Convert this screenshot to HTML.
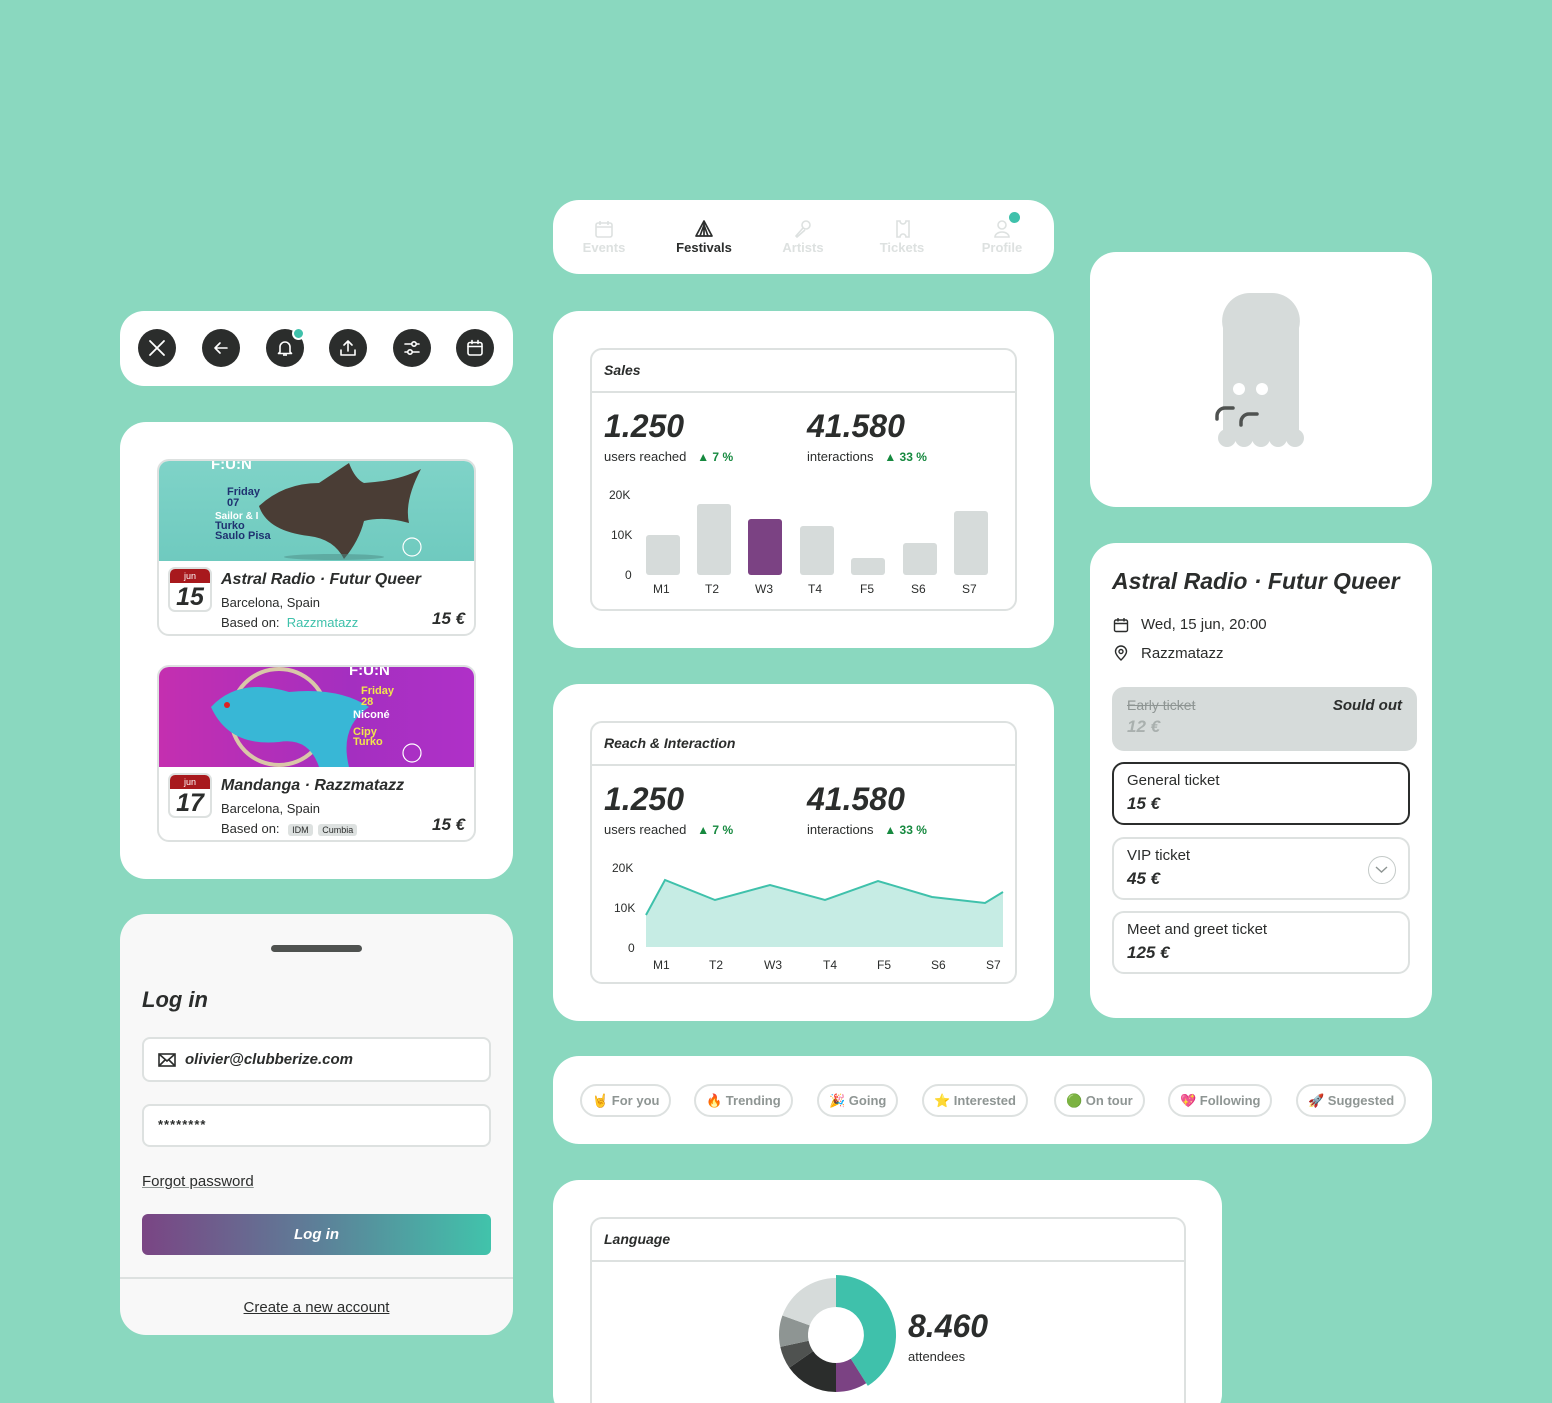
<!DOCTYPE html>
<html><head><meta charset="utf-8"><style>
*{box-sizing:border-box;margin:0;padding:0}
html,body{width:1552px;height:1403px;overflow:hidden}
body{background:#8AD8BF;font-family:"Liberation Sans",sans-serif;color:#2b2d2c;position:relative}
.card{position:absolute;background:#fff;border-radius:26px}
.abs{position:absolute}
.bi{font-weight:bold;font-style:italic}
.box{position:absolute;border:2px solid #dde1e0;border-radius:12px;background:#fff}
.btn{position:absolute;width:38px;height:38px;border-radius:50%;background:#2b2d2c;top:329px}
.btn svg{position:absolute;left:9px;top:9px}
.chip{position:absolute;top:1084px;height:33px;border:2px solid #dde1e0;border-radius:17px;font-size:13px;font-weight:bold;color:#8e9593;line-height:29px;padding:0 10px;white-space:nowrap}
.tk{position:absolute;left:1112px;width:298px;height:63px;border:2px solid #dde1e0;border-radius:12px;padding:8px 13px}
.tk .n{font-size:15px}
.tk .p{font-size:17px;font-weight:bold;font-style:italic;margin-top:5px}
.nav{position:absolute;top:240px;font-size:13px;font-weight:bold;color:#dde1e0;width:80px;text-align:center}
.lbl{position:absolute;font-size:12px;color:#2b2d2c}
.big{font-size:32px}
</style></head><body>

<!-- Toolbar -->
<div class="card" style="left:120px;top:311px;width:393px;height:75px;border-radius:24px"></div>
<div class="btn" style="left:138px"><svg width="20" height="20" viewBox="0 0 20 20" fill="none" stroke="#fff" stroke-width="1.8" stroke-linecap="round"><path d="M3 3L17 17M17 3L3 17"/></svg></div>
<div class="btn" style="left:202px"><svg width="20" height="20" viewBox="0 0 20 20" fill="none" stroke="#fff" stroke-width="1.6" stroke-linecap="round" stroke-linejoin="round"><path d="M4 10H16M9 5L4 10L9 15"/></svg></div>
<div class="btn" style="left:266px"><svg width="20" height="20" viewBox="0 0 20 20" fill="none" stroke="#fff" stroke-width="1.6" stroke-linejoin="round"><path d="M5 14V9a5 5 0 0 1 10 0v5l1.5 1.5h-13Z"/><path d="M8 17h4"/></svg></div>
<div class="abs" style="left:292px;top:327px;width:13px;height:13px;border-radius:50%;background:#3fc1ab;border:2px solid #fff"></div>
<div class="btn" style="left:329px"><svg width="20" height="20" viewBox="0 0 20 20" fill="none" stroke="#fff" stroke-width="1.6" stroke-linecap="round" stroke-linejoin="round"><path d="M10 13V3M6 7l4-4 4 4M3 12v5h14v-5"/></svg></div>
<div class="btn" style="left:393px"><svg width="20" height="20" viewBox="0 0 20 20" fill="none" stroke="#fff" stroke-width="1.6" stroke-linecap="round"><path d="M3 6h14M3 14h14"/><circle cx="12" cy="6" r="2.2" fill="#2b2d2c"/><circle cx="8" cy="14" r="2.2" fill="#2b2d2c"/></svg></div>
<div class="btn" style="left:456px"><svg width="20" height="20" viewBox="0 0 20 20" fill="none" stroke="#fff" stroke-width="1.6" stroke-linecap="round"><rect x="3" y="4.5" width="14" height="12.5" rx="2"/><path d="M3 8.5h14M7 2.5v3M13 2.5v3"/></svg></div>

<!-- Events card -->
<div class="card" style="left:120px;top:422px;width:393px;height:457px"></div>
<div class="box" style="left:157px;top:459px;width:319px;height:177px;overflow:hidden">
  <div class="abs" style="left:0;top:0;width:319px;height:100px;background:linear-gradient(180deg,#7fd3c8,#6fcabf)">
    <svg width="319" height="100" viewBox="0 0 319 100"><path d="M100 45 Q125 22 160 22 L190 2 Q196 18 205 22 Q240 20 262 8 Q245 40 250 62 Q225 55 205 60 Q200 80 185 98 Q175 78 150 75 Q108 70 100 45Z" fill="#4a3d35"/><ellipse cx="175" cy="96" rx="50" ry="3" fill="#4b8b85" opacity=".5"/><text x="52" y="8" font-size="15" font-weight="bold" fill="#fff" font-family="Liberation Sans">F:U:N</text><text x="68" y="34" font-size="11" font-weight="bold" fill="#1f3270" font-family="Liberation Sans">Friday</text><text x="68" y="45" font-size="11" font-weight="bold" fill="#1f3270" font-family="Liberation Sans">07</text><text x="56" y="58" font-size="10" font-weight="bold" fill="#fff" font-family="Liberation Sans">Sailor &amp; I</text><text x="56" y="68" font-size="11" font-weight="bold" fill="#1f3270" font-family="Liberation Sans">Turko</text><text x="56" y="78" font-size="11" font-weight="bold" fill="#1f3270" font-family="Liberation Sans">Saulo Pisa</text><circle cx="253" cy="86" r="9" fill="none" stroke="#fff" stroke-width="1.2"/></svg>
  </div>
  <div class="abs" style="left:9px;top:106px;width:44px;height:45px;border:2px solid #dde1e0;border-radius:7px;overflow:hidden"><div style="background:#a8191d;color:#fff;font-size:9px;text-align:center;height:14px;line-height:14px">jun</div><div class="bi" style="font-size:25px;text-align:center;line-height:28px">15</div></div>
  <div class="abs bi" style="left:62px;top:110px;font-size:16px">Astral Radio · Futur Queer</div>
  <div class="abs" style="left:62px;top:134px;font-size:13px">Barcelona, Spain</div>
  <div class="abs" style="left:62px;top:154px;font-size:13px">Based on: &nbsp;<span style="color:#3fc1ab">Razzmatazz</span></div>
  <div class="abs bi" style="left:273px;top:148px;font-size:17px">15 €</div>
</div>
<div class="box" style="left:157px;top:665px;width:319px;height:177px;overflow:hidden">
  <div class="abs" style="left:0;top:0;width:319px;height:100px;background:linear-gradient(90deg,#c42fb0,#a42fc0 60%,#b030c8)">
    <svg width="319" height="100" viewBox="0 0 319 100"><circle cx="120" cy="50" r="48" fill="none" stroke="#d9c7a8" stroke-width="4"/><path d="M52 40 Q80 10 130 25 Q180 20 210 40 Q180 60 190 100 L160 100 Q150 70 120 75 Q70 80 52 40Z" fill="#38b7d6"/><circle cx="68" cy="38" r="3" fill="#d22"/><text x="190" y="8" font-size="15" font-weight="bold" fill="#fff" font-family="Liberation Sans">F:U:N</text><text x="202" y="27" font-size="11" font-weight="bold" fill="#f2e54b" font-family="Liberation Sans">Friday</text><text x="202" y="38" font-size="11" font-weight="bold" fill="#f2e54b" font-family="Liberation Sans">28</text><text x="194" y="51" font-size="11" font-weight="bold" fill="#fff" font-family="Liberation Sans">Niconé</text><text x="194" y="68" font-size="11" font-weight="bold" fill="#f2e54b" font-family="Liberation Sans">Cipy</text><text x="194" y="78" font-size="11" font-weight="bold" fill="#f2e54b" font-family="Liberation Sans">Turko</text><circle cx="253" cy="86" r="9" fill="none" stroke="#fff" stroke-width="1.2"/></svg>
  </div>
  <div class="abs" style="left:9px;top:106px;width:44px;height:45px;border:2px solid #dde1e0;border-radius:7px;overflow:hidden"><div style="background:#a8191d;color:#fff;font-size:9px;text-align:center;height:14px;line-height:14px">jun</div><div class="bi" style="font-size:25px;text-align:center;line-height:28px">17</div></div>
  <div class="abs bi" style="left:62px;top:110px;font-size:16px">Mandanga · Razzmatazz</div>
  <div class="abs" style="left:62px;top:134px;font-size:13px">Barcelona, Spain</div>
  <div class="abs" style="left:62px;top:154px;font-size:13px">Based on: <span style="font-size:9px;background:#dde1e0;border-radius:3px;padding:1px 4px;margin-left:5px">IDM</span> <span style="font-size:9px;background:#dde1e0;border-radius:3px;padding:1px 4px;margin-left:2px">Cumbia</span></div>
  <div class="abs bi" style="left:273px;top:148px;font-size:17px">15 €</div>
</div>

<!-- Login -->
<div class="card" style="left:120px;top:914px;width:393px;height:421px;background:#f8f8f8;overflow:hidden">
  <div class="abs" style="left:151px;top:31px;width:91px;height:7px;border-radius:4px;background:#4f5250"></div>
  <div class="abs bi" style="left:22px;top:73px;font-size:22px">Log in</div>
  <div class="abs" style="left:22px;top:123px;width:349px;height:45px;border:2px solid #dde1e0;border-radius:8px;background:#fff"></div>
  <svg class="abs" style="left:38px;top:139px" width="18" height="14" viewBox="0 0 18 14" fill="none" stroke="#2b2d2c" stroke-width="1.6"><rect x="1" y="1" width="16" height="12"/><path d="M1 1L9 8L17 1M1 13L7 7M17 13L11 7"/></svg>
  <div class="abs bi" style="left:65px;top:137px;font-size:15px">olivier@clubberize.com</div>
  <div class="abs" style="left:22px;top:190px;width:349px;height:43px;border:2px solid #dde1e0;border-radius:8px;background:#fff"></div>
  <div class="abs" style="left:38px;top:203px;font-size:13px;font-weight:bold;letter-spacing:1px">********</div>
  <div class="abs" style="left:22px;top:259px;font-size:15px;text-decoration:underline;text-decoration-color:#8e9593">Forgot password</div>
  <div class="abs bi" style="left:22px;top:300px;width:349px;height:41px;border-radius:6px;background:linear-gradient(90deg,#7a4584,#5d7f98 50%,#41c3ab);color:#fff;text-align:center;line-height:41px;font-size:15px">Log in</div>
  <div class="abs" style="left:0;top:363px;width:393px;height:2px;background:#dde1e0"></div>
  <div class="abs" style="left:0;top:385px;width:393px;text-align:center;font-size:15px;text-decoration:underline">Create a new account</div>
</div>

<!-- Nav -->
<div class="card" style="left:553px;top:200px;width:501px;height:74px"></div>
<svg class="abs" style="left:594px;top:219px" width="20" height="20" viewBox="0 0 20 20" fill="none" stroke="#dde1e0" stroke-width="1.6"><rect x="2" y="4" width="16" height="14" rx="2"/><path d="M2 8h16M6 2v4M14 2v4"/></svg>
<svg class="abs" style="left:694px;top:219px" width="20" height="20" viewBox="0 0 20 20" fill="none" stroke="#2b2d2c" stroke-width="1.7" stroke-linejoin="round"><path d="M10 2L2 17H18ZM10 2V17M10 6L6 17M10 6l4 11"/></svg>
<svg class="abs" style="left:793px;top:219px" width="20" height="20" viewBox="0 0 20 20" fill="none" stroke="#dde1e0" stroke-width="1.6"><circle cx="13" cy="6" r="4"/><path d="M10 9L3 17l1 1 8-7"/></svg>
<svg class="abs" style="left:893px;top:219px" width="20" height="20" viewBox="0 0 20 20" fill="none" stroke="#dde1e0" stroke-width="1.6"><path d="M4 2h3a3 3 0 0 0 6 0h3v16h-3a3 3 0 0 0-6 0H4Z"/></svg>
<svg class="abs" style="left:992px;top:219px" width="20" height="20" viewBox="0 0 20 20" fill="none" stroke="#dde1e0" stroke-width="1.6"><circle cx="10" cy="6" r="4"/><path d="M3 18a7 5 0 0 1 14 0Z"/></svg>
<div class="abs" style="left:1009px;top:212px;width:11px;height:11px;border-radius:50%;background:#3fc1ab"></div>
<div class="nav" style="left:564px">Events</div>
<div class="nav" style="left:664px;color:#2b2d2c">Festivals</div>
<div class="nav" style="left:763px">Artists</div>
<div class="nav" style="left:862px">Tickets</div>
<div class="nav" style="left:962px">Profile</div>

<!-- Sales -->
<div class="card" style="left:553px;top:311px;width:501px;height:337px"></div>
<div class="box" style="left:590px;top:348px;width:427px;height:263px"></div>
<div class="abs" style="left:592px;top:391px;width:423px;height:2px;background:#dde1e0"></div>
<div class="abs bi" style="left:604px;top:362px;font-size:14px">Sales</div>
<div class="abs bi big" style="left:604px;top:408px">1.250</div>
<div class="abs" style="left:604px;top:449px;font-size:13px">users reached &nbsp;&nbsp;<b style="color:#16893f;font-size:12px">▲ 7 %</b></div>
<div class="abs bi big" style="left:807px;top:408px">41.580</div>
<div class="abs" style="left:807px;top:449px;font-size:13px">interactions &nbsp;&nbsp;<b style="color:#16893f;font-size:12px">▲ 33 %</b></div>
<div class="lbl" style="left:609px;top:488px">20K</div>
<div class="lbl" style="left:611px;top:528px">10K</div>
<div class="lbl" style="left:625px;top:568px">0</div>
<svg class="abs" style="left:640px;top:500px" width="360" height="80"><g fill="#d6dbda"><rect x="6" y="35" width="34" height="40" rx="3"/><rect x="57" y="4" width="34" height="71" rx="3"/><rect x="160" y="26" width="34" height="49" rx="3"/><rect x="211" y="58" width="34" height="17" rx="3"/><rect x="263" y="43" width="34" height="32" rx="3"/><rect x="314" y="11" width="34" height="64" rx="3"/></g><rect x="108" y="19" width="34" height="56" rx="3" fill="#7b4283"/></svg>
<div class="lbl" style="left:653px;top:582px">M1</div><div class="lbl" style="left:705px;top:582px">T2</div><div class="lbl" style="left:755px;top:582px">W3</div><div class="lbl" style="left:808px;top:582px">T4</div><div class="lbl" style="left:860px;top:582px">F5</div><div class="lbl" style="left:911px;top:582px">S6</div><div class="lbl" style="left:962px;top:582px">S7</div>

<!-- Reach -->
<div class="card" style="left:553px;top:684px;width:501px;height:337px"></div>
<div class="box" style="left:590px;top:721px;width:427px;height:263px"></div>
<div class="abs" style="left:592px;top:764px;width:423px;height:2px;background:#dde1e0"></div>
<div class="abs bi" style="left:604px;top:735px;font-size:14px">Reach &amp; Interaction</div>
<div class="abs bi big" style="left:604px;top:781px">1.250</div>
<div class="abs" style="left:604px;top:822px;font-size:13px">users reached &nbsp;&nbsp;<b style="color:#16893f;font-size:12px">▲ 7 %</b></div>
<div class="abs bi big" style="left:807px;top:781px">41.580</div>
<div class="abs" style="left:807px;top:822px;font-size:13px">interactions &nbsp;&nbsp;<b style="color:#16893f;font-size:12px">▲ 33 %</b></div>
<div class="lbl" style="left:612px;top:861px">20K</div>
<div class="lbl" style="left:614px;top:901px">10K</div>
<div class="lbl" style="left:628px;top:941px">0</div>
<svg class="abs" style="left:640px;top:870px" width="370" height="80" viewBox="640 870 370 80"><path d="M646 915L665 880L715 900L770 885L825 900L878 881L932 897L985 903L1003 892V947H646Z" fill="#c6ece4"/><path d="M646 915L665 880L715 900L770 885L825 900L878 881L932 897L985 903L1003 892" fill="none" stroke="#3fc1ab" stroke-width="2"/></svg>
<div class="lbl" style="left:653px;top:958px">M1</div><div class="lbl" style="left:709px;top:958px">T2</div><div class="lbl" style="left:764px;top:958px">W3</div><div class="lbl" style="left:823px;top:958px">T4</div><div class="lbl" style="left:877px;top:958px">F5</div><div class="lbl" style="left:931px;top:958px">S6</div><div class="lbl" style="left:986px;top:958px">S7</div>

<!-- Ghost -->
<div class="card" style="left:1090px;top:252px;width:342px;height:255px"></div>
<svg class="abs" style="left:1180px;top:280px" width="150" height="180" viewBox="0 0 150 180"><path d="M43 48A28 28 0 0 1 71 13H91A28 28 0 0 1 119 48V158H43Z" fill="#d6dbda"/><g fill="#d6dbda"><circle cx="47" cy="158" r="9"/><circle cx="64" cy="158" r="9"/><circle cx="81" cy="158" r="9"/><circle cx="98" cy="158" r="9"/><circle cx="115" cy="158" r="9"/></g><circle cx="59" cy="109" r="6" fill="#fff"/><circle cx="82" cy="109" r="6" fill="#fff"/><path d="M37 139V136A8 8 0 0 1 45 128H53M61 145V142A8 8 0 0 1 69 134H77" fill="none" stroke="#4f5250" stroke-width="3.5" stroke-linecap="round"/></svg>

<!-- Tickets -->
<div class="card" style="left:1090px;top:543px;width:342px;height:475px"></div>
<div class="abs bi" style="left:1112px;top:568px;font-size:23px">Astral Radio · Futur Queer</div>
<svg class="abs" style="left:1113px;top:617px" width="16" height="16" viewBox="0 0 16 16" fill="none" stroke="#2b2d2c" stroke-width="1.4"><rect x="1.5" y="3" width="13" height="11.5" rx="1.5"/><path d="M1.5 6.5h13M5 1v3.5M11 1v3.5"/></svg>
<div class="abs" style="left:1141px;top:616px;font-size:15px">Wed, 15 jun, 20:00</div>
<svg class="abs" style="left:1114px;top:645px" width="14" height="16" viewBox="0 0 14 16" fill="none" stroke="#2b2d2c" stroke-width="1.4"><path d="M7 15S1.5 10 1.5 6.5a5.5 5.5 0 0 1 11 0C12.5 10 7 15 7 15Z"/><circle cx="7" cy="6.5" r="2"/></svg>
<div class="abs" style="left:1141px;top:645px;font-size:15px">Razzmatazz</div>
<div class="abs" style="left:1112px;top:687px;width:305px;height:64px;border-radius:12px;background:#d6dbda;padding:10px 15px">
  <div style="font-size:14px;color:#8e9593;text-decoration:line-through">Early ticket</div>
  <div class="bi" style="font-size:17px;color:#a9b0ae;margin-top:4px">12 €</div>
  <div class="abs bi" style="right:15px;top:10px;font-size:15px">Sould out</div>
</div>
<div class="tk" style="top:762px;border-color:#2b2d2c"><div class="n">General ticket</div><div class="p">15 €</div></div>
<div class="tk" style="top:837px"><div class="n">VIP ticket</div><div class="p">45 €</div>
  <div class="abs" style="right:12px;top:17px;width:28px;height:28px;border-radius:50%;border:1.5px solid #c4cac8"><svg width="25" height="25" viewBox="0 0 25 25" fill="none" stroke="#8e9593" stroke-width="1.4"><path d="M7 10l5.5 5 5.5-5"/></svg></div></div>
<div class="tk" style="top:911px"><div class="n">Meet and greet ticket</div><div class="p">125 €</div></div>

<!-- Chips -->
<div class="card" style="left:553px;top:1056px;width:879px;height:88px"></div>
<div class="chip" style="left:580px">🤘 For you</div>
<div class="chip" style="left:694px">🔥 Trending</div>
<div class="chip" style="left:817px">🎉 Going</div>
<div class="chip" style="left:922px">⭐ Interested</div>
<div class="chip" style="left:1054px">🟢 On tour</div>
<div class="chip" style="left:1168px">💖 Following</div>
<div class="chip" style="left:1296px">🚀 Suggested</div>

<!-- Language -->
<div class="card" style="left:553px;top:1180px;width:669px;height:240px"></div>
<div class="box" style="left:590px;top:1217px;width:596px;height:220px"></div>
<div class="abs" style="left:592px;top:1260px;width:592px;height:2px;background:#dde1e0"></div>
<div class="abs bi" style="left:604px;top:1231px;font-size:14px">Language</div>
<svg class="abs" style="left:770px;top:1270px" width="130" height="130" viewBox="770 1270 130 130">
<path d="M836 1275A60 60 0 0 1 867.8 1385.9L850.8 1358.7A28 28 0 0 0 836 1307Z" fill="#3fc1ab"/>
<path d="M866.2 1383.3A57 57 0 0 1 836 1392V1363A28 28 0 0 0 850.8 1358.7Z" fill="#7b4283"/>
<path d="M836 1392A57 57 0 0 1 789.3 1367.7L813.1 1351.1A28 28 0 0 0 836 1363Z" fill="#2b2d2c"/>
<path d="M789.3 1367.7A57 57 0 0 1 780.3 1346.9L808.6 1340.8A28 28 0 0 0 813.1 1351.1Z" fill="#4f5250"/>
<path d="M780.3 1346.9A57 57 0 0 1 782.4 1315.5L809.7 1325.4A28 28 0 0 0 808.6 1340.8Z" fill="#8e9593"/>
<path d="M782.4 1315.5A57 57 0 0 1 836 1278V1307A28 28 0 0 0 809.7 1325.4Z" fill="#d6dbda"/>
</svg>
<div class="abs bi big" style="left:908px;top:1308px">8.460</div>
<div class="abs" style="left:908px;top:1349px;font-size:13px">attendees</div>
</body></html>
